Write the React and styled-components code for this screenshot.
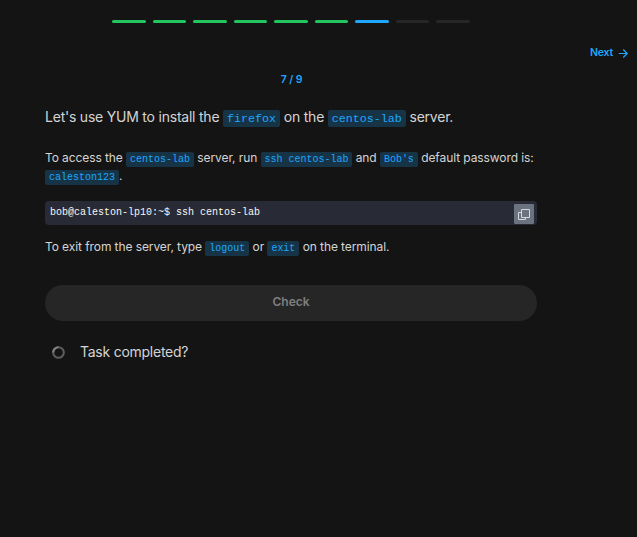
import React from "react";
import styled, { createGlobalStyle } from "styled-components";

const GlobalStyle = createGlobalStyle`
  * { box-sizing: border-box; }
  body {
    margin: 0;
    background: #141414;
    color: #d4d4d4;
    font-family: Inter, "Liberation Sans", sans-serif;
  }
`;

const Page = styled.main`
  display: flex;
  flex-direction: column;
  width: 637px;
  height: 537px;
  overflow: hidden;
  background: #141414;
`;

const Steps = styled.div`
  display: grid;
  grid-template-columns: repeat(9, 1fr);
  column-gap: 7px;
  width: 358px;
  margin: 20px 0 0 112px;
`;

const stepColors = { done: "#22c55e", current: "#1ea7fd", todo: "#262626" };

const Step = styled.span`
  height: 3px;
  border-radius: 2px;
  background: ${({ $state }) => stepColors[$state]};
`;

const Nav = styled.nav`
  display: flex;
  justify-content: flex-end;
  margin-top: 22px;
  padding-right: 8px;
`;

const NextButton = styled.button`
  display: flex;
  align-items: center;
  gap: 5px;
  height: 16px;
  padding: 0;
  border: 0;
  background: none;
  color: #1ea7fd;
  font: 600 10.5px/16px Inter, sans-serif;
  letter-spacing: -0.2px;
`;

const Content = styled.section`
  display: flex;
  flex-direction: column;
  width: 492px;
  margin-left: 45px;
`;

const Counter = styled.div`
  margin-top: 11px;
  padding-left: 1px;
  text-align: center;
  color: #1ea7fd;
  font-size: 10.5px;
  font-weight: 600;
  line-height: 16px;
  letter-spacing: -0.1px;
`;

const Lead = styled.p`
  margin: 17px 0 0;
  font-size: 14px;
  line-height: 24px;
  letter-spacing: -0.22px;
  white-space: nowrap;
`;

const Text = styled.p`
  margin: ${({ $top }) => $top}px 0 0;
  font-size: 12px;
  line-height: 18px;
  letter-spacing: -0.085px;
  white-space: nowrap;
`;

const Code = styled.code`
  padding: 2px 4px;
  border-radius: 2px;
  background: #173447;
  color: #1ea7fd;
  font-family: "Liberation Mono", monospace;
  font-size: 0.8333em;
  line-height: 1;
  letter-spacing: 0;
`;

const LeadCode = styled(Code)`
  padding-bottom: 1px;
`;

const Terminal = styled.div`
  display: flex;
  justify-content: space-between;
  height: 24px;
  margin-top: 16px;
  padding: 3px 3px 1px 5px;
  border-radius: 4px;
  background: #282a36;
`;

const Command = styled.code`
  color: #f8f8f2;
  font: 10px/18px "Liberation Mono", monospace;
  white-space: pre;
`;

const CopyButton = styled.button`
  display: flex;
  align-items: center;
  justify-content: center;
  width: 20px;
  height: 20px;
  padding: 0;
  border: 0;
  border-radius: 1px;
  background: #6b7280;
`;

const CheckButton = styled.button`
  height: 36px;
  margin-top: 29px;
  padding: 0 0 2px;
  border: 0;
  border-radius: 18px;
  background: #262626;
  color: #7f7f7f;
  font: 600 12px/18px Inter, sans-serif;
`;

const Status = styled.div`
  display: flex;
  align-items: center;
  gap: 15px;
  height: 24px;
  margin-top: 19px;
  padding-left: 7px;
  font-size: 14px;
  line-height: 24px;
  letter-spacing: -0.25px;
`;

const states = ["done", "done", "done", "done", "done", "done", "current", "todo", "todo"];

function ArrowIcon() {
  return (
    <svg width="11" height="11" viewBox="0 0 11 11" fill="none" stroke="currentColor" strokeWidth="1.2">
      <path d="M.8 5.5h8.2M5.2 1.5l4 4-4 4" />
    </svg>
  );
}

function CopyIcon() {
  return (
    <svg width="14" height="14" viewBox="0 0 14 14" fill="none" stroke="#d5d8dd">
      <path d="M4.5 2.5h8v8h-8z" />
      <path d="M4 5.5H1.5v7h7V11" />
    </svg>
  );
}

function Spinner() {
  return (
    <svg width="13" height="13" viewBox="0 0 13 13" fill="none" strokeWidth="2.1">
      <circle cx="6.5" cy="6.5" r="5.3" stroke="#5c5c5c" />
      <path d="M1.2 6.5A5.3 5.3 0 0 1 6.5 1.2" stroke="#808080" />
    </svg>
  );
}

export default function App() {
  return (
    <Page>
      <GlobalStyle />
      <Steps>
        {states.map((state, i) => (
          <Step key={i} $state={state} />
        ))}
      </Steps>
      <Nav>
        <NextButton>
          Next
          <ArrowIcon />
        </NextButton>
      </Nav>
      <Content>
        <Counter>7 / 9</Counter>
        <Lead>
          Let's use YUM to install the <LeadCode>firefox</LeadCode> on the{" "}
          <LeadCode>centos-lab</LeadCode> server.
        </Lead>
        <Text $top={20}>
          To access the <Code>centos-lab</Code> server, run <Code>ssh centos-lab</Code> and{" "}
          <Code>Bob's</Code> default password is:
          <br />
          <Code>caleston123</Code>.
        </Text>
        <Terminal>
          <Command>bob@caleston-lp10:~$ ssh centos-lab</Command>
          <CopyButton aria-label="Copy">
            <CopyIcon />
          </CopyButton>
        </Terminal>
        <Text $top={13}>
          To exit from the server, type <Code>logout</Code> or <Code>exit</Code> on the terminal.
        </Text>
        <CheckButton disabled>Check</CheckButton>
        <Status>
          <Spinner />
          Task completed?
        </Status>
      </Content>
    </Page>
  );
}
